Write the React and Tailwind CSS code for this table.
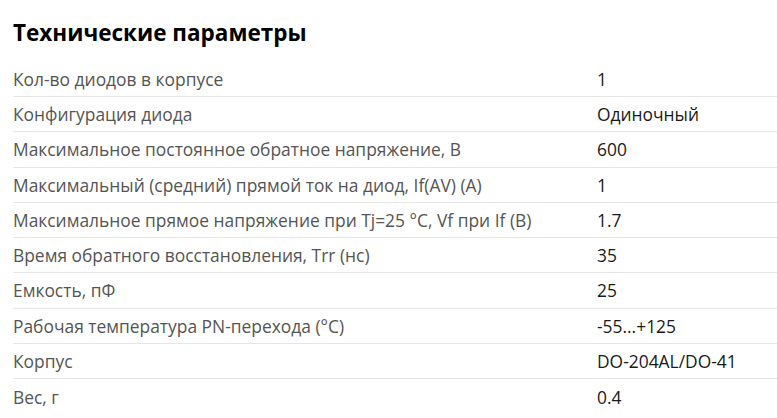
export default function App() {
  const rows = [
    ["Кол-во диодов в корпусе", "1"],
    ["Конфигурация диода", "Одиночный"],
    ["Максимальное постоянное обратное напряжение, В", "600"],
    ["Максимальный (средний) прямой ток на диод, If(AV) (A)", "1"],
    ["Максимальное прямое напряжение при Tj=25 °C, Vf при If (B)", "1.7"],
    ["Время обратного восстановления, Trr (нс)", "35"],
    ["Емкость, пФ", "25"],
    ["Рабочая температура PN-перехода (°C)", "-55...+125"],
    ["Корпус", "DO-204AL/DO-41"],
    ["Вес, г", "0.4"],
  ];
  return (
    <div className="w-[777px] h-[418px] bg-white overflow-hidden pl-[13px] pt-[18px]" style={{ fontFamily: '"Open Sans", sans-serif' }}>
      <h2 className="text-[22.5px] font-bold text-black leading-[30px] h-[43.75px]">Технические параметры</h2>
      <div>
        {rows.map(([k, v], i) => (
          <div key={i} className="flex items-center h-[35.25px] border-b border-[#e6e6e6] last:border-b-0 text-[17.4px]">
            <div className="w-[584px] text-[#555555]">{k}</div>
            <div className="text-[#1a1a1a]">{v}</div>
          </div>
        ))}
      </div>
    </div>
  );
}
